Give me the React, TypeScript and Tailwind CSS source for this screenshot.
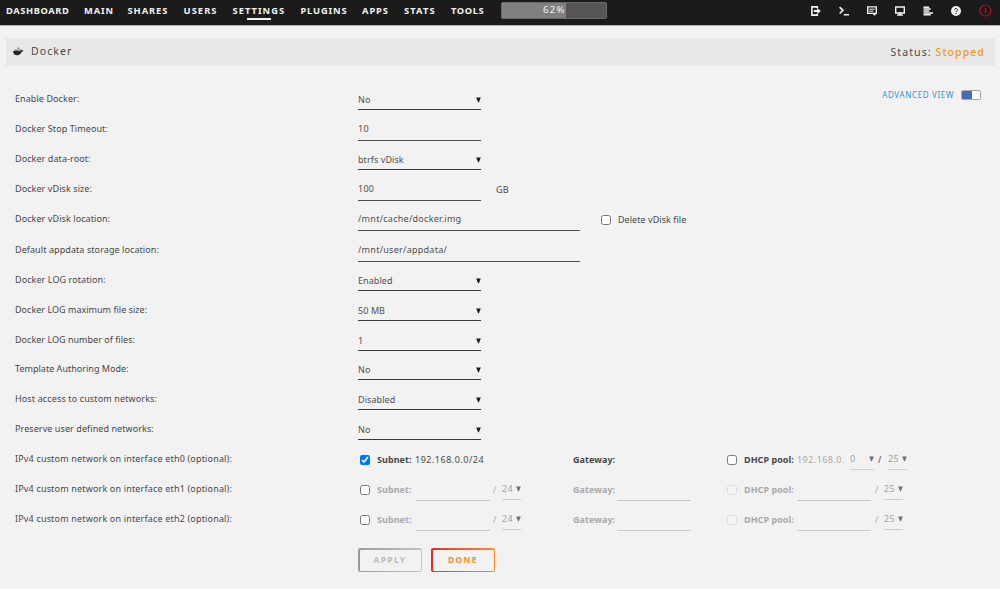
import type { ReactNode } from 'react';

// Top menu entries, with the slot each one takes in the bar
const navItems = [
  { name: 'DASHBOARD', slot: 'w-[78px] tracking-[0.6px]' },
  { name: 'MAIN', slot: 'w-[43.5px] tracking-[0.9px]' },
  { name: 'SHARES', slot: 'w-[56px] tracking-[0.95px]' },
  { name: 'USERS', slot: 'w-[49px] tracking-[1.1px]' },
  { name: 'SETTINGS', slot: 'w-[68px] tracking-[1.05px]', active: true },
  { name: 'PLUGINS', slot: 'w-[61.5px] tracking-[0.85px]' },
  { name: 'APPS', slot: 'w-[42px] tracking-[0.95px]' },
  { name: 'STATS', slot: 'w-[47px] tracking-[1.1px]' },
  { name: 'TOOLS', slot: 'w-[50px] tracking-[0.6px]' },
];

const Arrow = ({ className = 'text-[#1c1b1b]' }: any) => (
  <svg width="5" height="6" viewBox="0 0 5 6" fill="currentColor" className={`shrink-0 ${className}`}>
    <path d="M0.2 0.5h4.600L2.900 5.200h-.8z" />
  </svg>
);

const Select = ({ value }: { value: string }) => (
  <div className="flex h-[21px] w-[123px] items-center justify-between border-b border-[#3a3a3a] pt-px text-[#505050]">
    <span>{value}</span>
    <Arrow />
  </div>
);

const Input = ({ value, wide }: { value: string; wide?: boolean }) => (
  <div className={`flex h-[22px] items-center border-b border-[#4c4c4c] tracking-[0.27px] text-[#505050] ${wide ? 'w-[222px]' : 'w-[123px]'}`}>
    {value}
  </div>
);

const Row = ({ label, height = 'h-[30px]', spacing = '', children }: { label: string; height?: string; spacing?: string; children: ReactNode }) => (
  <div className={`flex ${height}`}>
    <div className={`h-[29px] w-[343px] shrink-0 leading-[29px] ${spacing}`}>{label}</div>
    <div className="flex h-[31px] shrink-0 items-center">{children}</div>
  </div>
);

const Check = ({ checked, disabled }: { checked?: boolean; disabled?: boolean }) => (
  <input
    type="checkbox"
    defaultChecked={checked}
    disabled={disabled}
    className={`m-0 block h-[10px] w-[10px] shrink-0 ${disabled ? 'opacity-50' : ''}`}
  />
);

// Short underlined mask selector
const Mask = ({ value }: { value: string }) => (
  <div className="flex h-[20px] w-[19px] items-center justify-between border-b border-[#cfcfcf] text-[#a0a0a0]">
    <span className="tracking-[0.4px]">{value}</span>
    <Arrow className="text-[#707070]" />
  </div>
);

const Blank = () => <div className="h-[22px] w-[74px] border-b border-[#c8c8c8]" />;

const Network = () => (
  <div className="flex shrink-0 items-center text-[#a9a9a9]">
    <div className="flex w-[215px] items-center pl-[2px]">
      <Check />
      <b className="ml-[7px] w-[39px] tracking-[0.05px]">Subnet:</b>
      <Blank />
      <span className="w-[12px] pl-[3px]">/</span>
      <Mask value="24" />
    </div>
    <div className="flex w-[154px] items-center">
      <b className="w-[44px] tracking-[0.05px]">Gateway:</b>
      <Blank />
    </div>
    <Check disabled />
    <b className="ml-[7px] w-[53px] tracking-[0.05px]">DHCP pool:</b>
    <Blank />
    <span className="w-[13px] pl-[4px]">/</span>
    <Mask value="25" />
  </div>
);

const Toolbar = () => (
  <div className="flex items-center text-[#f2f2f2]">
    {/* logout */}
    <svg className="mr-[18px]" width="10" height="10" viewBox="0 0 10 10">
      <path d="M6.300 2.200V.9H.9v8.200h5.400V7.800" fill="none" stroke="currentColor" strokeWidth="1.600" />
      <path d="M2.800 3.900h3.400V1.900L9.900 5 6.200 8.100V6.100H2.800z" fill="currentColor" />
    </svg>
    {/* terminal */}
    <svg className="mr-[18px]" width="10" height="10" viewBox="0 0 10 10" fill="none" stroke="currentColor" strokeWidth="1.6">
      <path d="M.6 1.200 4 4.300.6 7.500M4.800 8.800h5.200" />
    </svg>
    {/* feedback */}
    <svg className="mr-[18px]" width="10" height="10" viewBox="0 0 10 10" fill="none" stroke="currentColor">
      <path d="M.7.9h8.600v6.500H.7z" strokeWidth="1.400" />
      <path d="M2.300 3.200h5.400M2.300 5.200h4" />
      <path d="M4.800 7.500h3.600v2.500z" fill="currentColor" stroke="none" />
    </svg>
    {/* monitor */}
    <svg className="mr-[18px]" width="10" height="10" viewBox="0 0 10 10" fill="none" stroke="currentColor">
      <path d="M.7 1h8.600v6H.7z" strokeWidth="1.400" />
      <path d="M4 7h2v1.500H4zM2 9.200h6" strokeWidth="1.200" />
    </svg>
    {/* log */}
    <svg className="mr-[18px]" width="10" height="10" viewBox="0 0 10 10" stroke="currentColor" strokeWidth="1.5">
      <path d="M.5 1.200h5.700M.5 3.100h7.200M.5 5h5.800M.5 6.900h9.500M.5 8.800h7.200" />
    </svg>
    {/* help */}
    <svg className="mr-[18px]" width="10" height="10" viewBox="0 0 10 10">
      <circle cx="5" cy="5" r="5" fill="currentColor" />
      <path d="M3.500 3.900C3.500 1.900 6.600 2 6.600 3.800 6.600 4.900 5 4.800 5 6.100M5 7v1.100" fill="none" stroke="#1c1b1b" />
    </svg>
    {/* array alert */}
    <svg width="13" height="13" viewBox="0 0 13 13" fill="none" stroke="#b50c28">
      <circle cx="6.5" cy="6.5" r="5.5" strokeWidth="1.2" />
      <path d="M6.500 3.800v5.400" strokeWidth="1.4" />
    </svg>
  </div>
);

const App = () => {
  return (
    <div className="h-[589px] w-[1000px] overflow-hidden bg-[#f2f2f2] font-['Noto_Sans',sans-serif] text-[9px] tracking-[0.08px] text-[#484848]">
      <header className="flex h-[26px] justify-between border-b border-[#b4b4b4] bg-[#1c1b1b] pl-[6px] pr-[8px]">
        <div className="flex">
          <nav className="flex pt-[3px] text-[9.3px] font-bold leading-[15px] text-[#f2f2f2]">
            {navItems.map((item) => (
              <div key={item.name} className={`shrink-0 whitespace-nowrap ${item.slot}`}>
                {item.name}
                {item.active && <div className="ml-[14px] h-[2px] w-[24px] bg-[#f2f2f2]" />}
              </div>
            ))}
          </nav>
          <div className="relative mt-[2px] h-[17px] w-[106px] rounded-[2px] border border-[#686868] bg-[#565656]">
            <div className="h-[15px] w-[64px] bg-[#808080]" />
            <span className="absolute left-[41px] top-0 text-[9.5px] leading-[14px] tracking-[1.3px] text-[#f2f2f2]">62%</span>
          </div>
        </div>
        <div className="flex h-[21px] items-center">
          <Toolbar />
        </div>
      </header>

      {/* Page title */}
      <div className="ml-[6px] mt-[12px] flex h-[28px] w-[989px] items-center justify-between bg-[#e8e8e8] pl-[7px] pr-[10px] text-[10.5px] tracking-[1.1px]">
        <div className="flex items-center">
          <svg width="11" height="9" viewBox="0 0 11 9" className="mb-[2px] mr-[7px]">
            <path d="M1.300 2.400h5.200v1.800H1.300zM4.700.6h1.700v1.600H4.700z" fill="#8a8a8a" />
            <path d="M.1 4h7.200c.5-.5.3-1.300 0-1.800.7 0 1.200.5 1.400 1.100.7-.2 1.400-.1 1.900.2-.4.8-1 1-1.800 1C7.900 7 6.300 8.300 4 8.300 1.500 8.300.1 6.800.1 4z" fill="#252525" />
          </svg>
          <span>Docker</span>
        </div>
        <div className="pt-px">
          Status: <span className="font-medium text-[#ed9a22]">Stopped</span>
        </div>
      </div>

      <main className="flex justify-between pl-[15px] pr-[19px] pt-[18px]">
        <div className="w-[860px] shrink-0">
          <Row label="Enable Docker:">
            <Select value="No" />
          </Row>
          <Row label="Docker Stop Timeout:">
            <Input value="10" />
          </Row>
          <Row label="Docker data-root:">
            <Select value="btrfs vDisk" />
          </Row>
          <Row label="Docker vDisk size:">
            <Input value="100" />
            <span className="ml-[15px]">GB</span>
          </Row>
          <Row label="Docker vDisk location:" height="h-[31px]">
            <Input value="/mnt/cache/docker.img" wide />
            <div className="ml-[21px] mr-[7px]">
              <Check />
            </div>
            <span className="tracking-[0.05px]">Delete vDisk file</span>
          </Row>
          <Row label="Default appdata storage location:">
            <Input value="/mnt/user/appdata/" wide />
          </Row>
          <Row label="Docker LOG rotation:">
            <Select value="Enabled" />
          </Row>
          <Row label="Docker LOG maximum file size:" spacing="tracking-[0.02px]">
            <Select value="50 MB" />
          </Row>
          <Row label="Docker LOG number of files:" height="h-[29px]" spacing="tracking-[0.02px]">
            <Select value="1" />
          </Row>
          <Row label="Template Authoring Mode:" spacing="tracking-[0.02px]">
            <Select value="No" />
          </Row>
          <Row label="Host access to custom networks:" spacing="tracking-[0.13px]">
            <Select value="Disabled" />
          </Row>
          <Row label="Preserve user defined networks:">
            <Select value="No" />
          </Row>
          <Row label="IPv4 custom network on interface eth0 (optional):" spacing="tracking-[0.17px]">
            <div className="flex w-[215px] items-center pl-[2px]">
              <Check checked />
              <b className="ml-[7px] w-[38px] tracking-[0.05px]">Subnet:</b>
              <span className="tracking-[0.5px]">192.168.0.0/24</span>
            </div>
            <b className="w-[154px] tracking-[0.05px]">Gateway:</b>
            <Check />
            <b className="ml-[7px] w-[53px] tracking-[0.05px]">DHCP pool:</b>
            <span className="w-[53px] tracking-[0.45px] text-[#a9a9a9]">192.168.0.</span>
            <div className="flex h-[20px] w-[24px] items-center justify-between border-b border-[#cfcfcf] text-[#a0a0a0]">
              <span>0</span>
              <Arrow className="text-[#707070]" />
            </div>
            <span className="w-[14px] pl-[4px]">/</span>
            <Mask value="25" />
          </Row>
          <Row label="IPv4 custom network on interface eth1 (optional):" spacing="tracking-[0.17px]">
            <Network />
          </Row>
          <Row label="IPv4 custom network on interface eth2 (optional):" spacing="tracking-[0.17px]">
            <Network />
          </Row>

          <div className="ml-[343px] mt-[14px] flex gap-[9px] text-[8.5px] font-bold tracking-[1.3px]">
            <button className="h-[24px] w-[64px] rounded-[2px] bg-linear-to-r from-[#9a9a9a] to-[#c4c4c4] p-[1.5px] text-[#bababa]">
              <span className="flex h-full items-center justify-center rounded-[1px] bg-[#f2f2f2]">APPLY</span>
            </button>
            <button className="h-[24px] w-[64px] rounded-[2px] bg-linear-to-r from-[#e22828] to-[#ff8c2f] p-[1.5px] text-[#ff8c2f]">
              <span className="flex h-full items-center justify-center rounded-[1px] bg-[#f2f2f2]">DONE</span>
            </button>
          </div>
        </div>

        {/* View switch */}
        <div className="flex h-[21px] items-center whitespace-nowrap text-[8px] tracking-[0.65px] text-[#2f98cc]">
          ADVANCED VIEW
          <div className="ml-[7px] flex h-[10px] w-[20px] overflow-hidden rounded-[2px] border border-[#a8a8a8] bg-[#fafafa]">
            <div className="w-[10px] bg-[#466bb8]" />
          </div>
        </div>
      </main>
    </div>
  );
};

export default App;
